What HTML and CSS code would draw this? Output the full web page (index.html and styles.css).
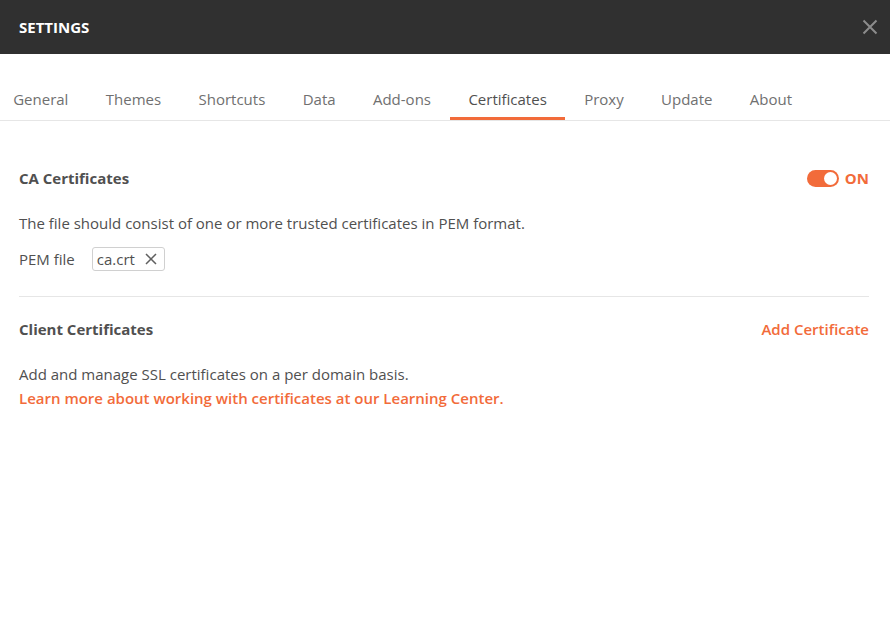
FILE: index.html
```html
<!DOCTYPE html>
<html>
<head>
<meta charset="utf-8">
<link rel="stylesheet" href="styles.css">
</head>
<body>
<div class="modal">
  <header class="header">
    <div class="title">SETTINGS</div>
    <button class="close" aria-label="Close">
      <svg width="16" height="16" viewBox="0 0 16 16"><path d="M1.5 1.5L14.5 14.5M14.5 1.5L1.5 14.5" stroke="#8c8c8c" stroke-width="2" fill="none"/></svg>
    </button>
  </header>
  <nav class="tabs">
    <div class="tab">General</div>
    <div class="tab">Themes</div>
    <div class="tab">Shortcuts</div>
    <div class="tab">Data</div>
    <div class="tab">Add-ons</div>
    <div class="tab active">Certificates</div>
    <div class="tab">Proxy</div>
    <div class="tab">Update</div>
    <div class="tab">About</div>
  </nav>
  <main class="content">
    <section class="section">
      <div class="section-head">
        <div class="section-title">CA Certificates</div>
        <div class="toggle-wrap">
          <span class="toggle"><span class="knob"></span></span>
          <span class="toggle-label">ON</span>
        </div>
      </div>
      <p class="text">The file should consist of one or more trusted certificates in PEM format.</p>
      <div class="pem-row">
        <span class="pem-label">PEM file</span>
        <span class="chip">ca.crt
          <svg width="12" height="12" viewBox="0 0 12 12"><path d="M1 1L11 11M11 1L1 11" stroke="#606060" stroke-width="1.5" fill="none"/></svg>
        </span>
      </div>
    </section>
    <div class="divider"></div>
    <section class="section">
      <div class="section-head">
        <div class="section-title">Client Certificates</div>
        <a class="link-btn">Add Certificate</a>
      </div>
      <p class="text text-client">Add and manage SSL certificates on a per domain basis.</p>
      <a class="learn">Learn more about working with certificates at our Learning Center.</a>
    </section>
  </main>
</div>
</body>
</html>
```

FILE: styles.css
```css
* { box-sizing: border-box; }
html, body { margin: 0; padding: 0; background: #fff; }
body {
  font-family: "Open Sans", "Liberation Sans", sans-serif;
  color: #505050;
  width: 890px;
  height: 617px;
  overflow: hidden;
}
.header {
  height: 54px;
  background: #303030;
  display: flex;
  align-items: center;
  justify-content: space-between;
  padding: 0 12px 0 19px;
}
.title {
  color: #fff;
  font-weight: 700;
  font-size: 15px;
}
.close {
  background: none;
  border: 0;
  padding: 0;
  width: 16px;
  height: 16px;
  display: flex;
  cursor: pointer;
}
.tabs {
  display: flex;
  margin-top: 24px;
  height: 43px;
  border-bottom: 1px solid #e6e6e6;
  margin-left: -5.5px;
}
.tab {
  padding: 0 18.7px;
  font-size: 15px;
  color: #707070;
  line-height: 42px;
  height: 42px;
  border-bottom: 3px solid transparent;
}
.tab.active {
  color: #505050;
  border-bottom-color: #f26b3a;
}
.content {
  padding: 0 21px 0 19px;
}
.section {
  display: flex;
  flex-direction: column;
}
.section-head {
  display: flex;
  justify-content: space-between;
  align-items: center;
  height: 22px;
  margin-top: 46px;
}
.section-title {
  font-size: 15px;
  font-weight: 700;
  color: #505050;
}
.toggle-wrap {
  display: flex;
  align-items: center;
  gap: 6px;
}
.toggle {
  width: 32px;
  height: 17px;
  border-radius: 9px;
  background: #f26b3a;
  position: relative;
  display: block;
}
.knob {
  position: absolute;
  right: 2px;
  top: 2px;
  width: 13px;
  height: 13px;
  border-radius: 50%;
  background: #fff;
}
.toggle-label {
  color: #f26b3a;
  font-weight: 700;
  font-size: 15px;
}
.text {
  margin: 0;
  font-size: 15px;
  line-height: 24px;
  color: #505050;
  margin-top: 22px;
}
.pem-row {
  display: flex;
  align-items: center;
  margin-top: 12px;
  height: 24px;
  font-size: 15px;
}
.pem-label {
  margin-right: 17px;
}
.chip {
  display: inline-flex;
  align-items: center;
  gap: 10px;
  height: 24px;
  border: 1px solid #d0d0d0;
  border-radius: 3px;
  padding: 0 7px 0 4px;
  font-size: 15px;
}
.divider {
  height: 1px;
  background: #e6e6e6;
  margin-top: 25px;
}
.section:last-child .section-head { margin-top: 21px; }
.link-btn, .learn {
  color: #f26b3a;
  font-weight: 600;
  font-size: 15px;
  text-decoration: none;
  cursor: pointer;
}
.text-client { margin-top: 22px; }
.learn {
  line-height: 24px;
}
```
